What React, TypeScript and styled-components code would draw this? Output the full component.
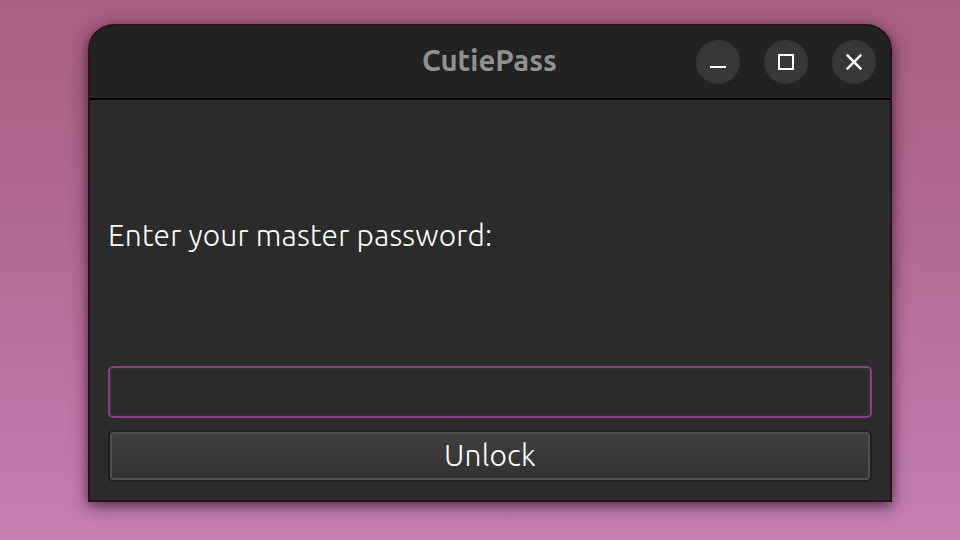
import React, { useState } from "react";
import styled, { createGlobalStyle } from "styled-components";

const GlobalStyle = createGlobalStyle`
  * { box-sizing: border-box; }
  html, body { margin: 0; height: 100%; overflow: hidden; }
  body { font-family: Ubuntu, "Open Sans", "Noto Sans", sans-serif; }
`;

const Desktop = styled.main`
  width: 960px;
  height: 540px;
  padding: 24px 68px 38px 88px;
  background: linear-gradient(180deg, #a85f82 0%, #b06990 40%, #c67fb4 100%);
`;

const Window = styled.section`
  display: flex;
  flex-direction: column;
  width: 804px;
  height: 478px;
  border: 2px solid #24141d;
  border-radius: 26px 26px 0 0;
  overflow: hidden;
  background: #2b2b2b;
  box-shadow: 0 4px 18px rgba(30, 0, 20, 0.5), 0 3px 8px rgba(30, 0, 20, 0.3);
`;

const TitleBar = styled.header`
  display: grid;
  grid-template-columns: 1fr auto 1fr;
  align-items: center;
  flex: none;
  height: 74px;
  padding: 0 14px;
  border-bottom: 2px solid #000;
  background: #222;
`;

const Title = styled.h1`
  grid-column: 2;
  margin: 0;
  padding: 0 1px 2px 0;
  color: #919191;
  font-size: 29.33px;
  font-weight: 700;
  line-height: 40px;
`;

const Controls = styled.div`
  display: flex;
  justify-content: flex-end;
  gap: 24px;
`;

const ControlButton = styled.button`
  display: grid;
  place-items: center;
  width: 44px;
  height: 44px;
  padding: 0;
  border: 0;
  border-radius: 50%;
  background: #373737;
`;

const Glyph = styled.svg`
  display: block;
  width: 44px;
  height: 44px;
  fill: none;
  stroke: #fff;
  stroke-width: 2;
`;

const Form = styled.form`
  display: flex;
  flex: 1;
  flex-direction: column;
  gap: 12px;
  padding: 18px;
`;

const Prompt = styled.label`
  display: flex;
  flex: 1;
  align-items: center;
  padding-bottom: 3px;
  color: #fff;
  font-size: 30px;
  font-weight: 300;
  line-height: 40px;
  letter-spacing: 0.17px;
`;

const PasswordInput = styled.input`
  flex: none;
  width: 100%;
  height: 52px;
  padding: 0 10px;
  border: 2px solid #8f3c8b;
  border-radius: 5px;
  outline: none;
  background: #2c2b2b;
  box-shadow: inset 0 0 0 2px #352e34;
  color: #fff;
  font-family: inherit;
  font-size: 30px;
  font-weight: 300;
`;

const UnlockButton = styled.button`
  flex: none;
  height: 48px;
  margin: 2px;
  padding: 0 0 3px;
  border: 2px solid #4f4f4f;
  border-radius: 4px;
  background: linear-gradient(#3f3f3f, #323232) padding-box;
  box-shadow: 0 0 0 2px #1f1f1f;
  color: #fff;
  font-family: inherit;
  font-size: 30px;
  font-weight: 300;
  line-height: 40px;
  letter-spacing: 0.17px;
`;

export default function App() {
  const [password, setPassword] = useState("");
  return (
    <>
      <GlobalStyle />
      <Desktop>
        <Window>
          <TitleBar>
            <Title>CutiePass</Title>
            <Controls>
              <ControlButton aria-label="Minimize">
                <Glyph viewBox="0 0 44 44"><path d="M14 27h16" /></Glyph>
              </ControlButton>
              <ControlButton aria-label="Maximize">
                <Glyph viewBox="0 0 44 44"><path d="M15 15h14v14H15z" /></Glyph>
              </ControlButton>
              <ControlButton aria-label="Close">
                <Glyph viewBox="0 0 44 44"><path d="M14.7 14.7l14.6 14.6M29.3 14.7L14.7 29.3" strokeWidth="2.4" /></Glyph>
              </ControlButton>
            </Controls>
          </TitleBar>
          <Form onSubmit={(e) => e.preventDefault()}>
            <Prompt htmlFor="password">Enter your master password:</Prompt>
            <PasswordInput
              id="password"
              type="password"
              value={password}
              onChange={(e) => setPassword(e.target.value)}
            />
            <UnlockButton type="submit">Unlock</UnlockButton>
          </Form>
        </Window>
      </Desktop>
    </>
  );
}
